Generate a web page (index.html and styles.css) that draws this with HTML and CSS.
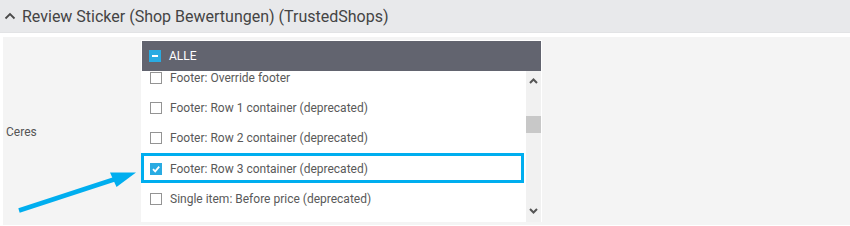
FILE: index.html
```html
<!DOCTYPE html>
<html lang="de">
<head>
<meta charset="utf-8">
<title>Review Sticker</title>
<link rel="stylesheet" href="styles.css">
</head>
<body>
<div class="page">
  <div class="section-header">
    <svg class="chev" width="12" height="8" viewBox="0 0 12 8"><path d="M1.5 6.5 L6 2 L10.5 6.5" fill="none" stroke="#4a4a4a" stroke-width="1.8"/></svg>
    <span class="section-title">Review Sticker (Shop Bewertungen) (TrustedShops)</span>
  </div>
  <div class="section-body">
    <div class="label">Ceres</div>
    <div class="listbox">
      <div class="list-head">
        <span class="cb cb-minus"></span>
        <span class="head-text">ALLE</span>
      </div>
      <div class="list-body">
        <div class="items">
          <ul class="item-list">
            <li class="item"><span class="cb"></span>Footer: Override footer</li>
            <li class="item"><span class="cb"></span>Footer: Row 1 container (deprecated)</li>
            <li class="item"><span class="cb"></span>Footer: Row 2 container (deprecated)</li>
            <li class="item"><span class="cb cb-checked"><svg width="10" height="10" viewBox="0 0 10 10"><path d="M2 5.2 L4.2 7.4 L8.2 2.6" fill="none" stroke="#fff" stroke-width="1.8"/></svg></span>Footer: Row 3 container (deprecated)</li>
            <li class="item"><span class="cb"></span>Single item: Before price (deprecated)</li>
          </ul>
        </div>
        <div class="scrollbar">
          <div class="sb-btn"><svg width="9" height="6" viewBox="0 0 9 6"><path d="M1 5 L4.5 1.5 L8 5" fill="none" stroke="#555" stroke-width="2"/></svg></div>
          <div class="sb-track"><div class="sb-thumb"></div></div>
          <div class="sb-btn sb-btn-down"><svg width="9" height="6" viewBox="0 0 9 6"><path d="M1 1 L4.5 4.5 L8 1" fill="none" stroke="#555" stroke-width="2"/></svg></div>
        </div>
      </div>
    </div>
  </div>
  <div class="highlight"></div>
  <svg class="annot-arrow" width="850" height="226" viewBox="0 0 850 226">
    <line x1="19" y1="210.5" x2="120" y2="177.5" stroke="#00aeef" stroke-width="4.5"/>
    <polygon points="110,172.5 136,172.5 116.5,187" fill="#00aeef"/>
  </svg>
</div>
</body>
</html>
```
FILE: styles.css
```css
* { box-sizing: border-box; }
html, body { margin: 0; padding: 0; background: #fff; }
body { font-family: Roboto, "Liberation Sans", Arial, sans-serif; }
.page { position: relative; width: 850px; height: 226px; overflow: hidden; }

.section-header {
  height: 33px;
  background: #e8e9eb;
  border-bottom: 1px solid #e2e3e5;
  display: flex;
  align-items: center;
  padding-left: 4px;
  gap: 6px;
}
.chev { display: block; margin-top: -1px; }
.section-title { font-size: 16px; color: #444; letter-spacing: 0; }

.section-body {
  margin: 4px 0 0 3px;
  height: 188px;
  background: #f4f4f4;
  display: grid;
  grid-template-columns: 138px 401px;
  padding: 3px 0;
}
.label {
  align-self: center;
  padding-left: 3px;
  padding-top: 1px;
  font-size: 12px;
  color: #555;
}
.listbox {
  border: 1px solid #fff;
  border-bottom: none;
  background: #fff;
  display: flex;
  flex-direction: column;
}
.list-head {
  height: 30px;
  background: #62646f;
  display: flex;
  align-items: center;
  padding-left: 7px;
  gap: 8px;
}
.head-text { color: #fff; font-size: 12px; font-weight: 400; }

.cb {
  width: 12px;
  height: 12px;
  border: 1px solid #949494;
  background: #fff;
  display: inline-flex;
  align-items: center;
  justify-content: center;
  flex: none;
}
.cb-minus { background: #29abe2; border-color: #29abe2; }
.cb-minus::after { content: ""; width: 6px; height: 2px; background: #fff; }
.cb-checked { background: #29abe2; border-color: #29abe2; }
.cb-checked svg { display: block; }

.list-body { display: flex; height: 151px; }
.items { flex: 1; overflow: hidden; }
.item-list { list-style: none; margin: -8.5px 0 0 0; padding: 0 0 0 8px; }
.item {
  height: 30.4px;
  display: flex;
  align-items: center;
  gap: 8px;
  font-size: 12px;
  color: #595959;
}

.scrollbar {
  width: 15px;
  background: #f1f1f1;
  display: flex;
  flex-direction: column;
}
.sb-btn { height: 20px; display: flex; align-items: center; justify-content: center; }
.sb-btn svg { display: block; }
.sb-btn-down { height: 18px; align-items: flex-start; padding-top: 4px; }
.sb-track { flex: 1; }
.sb-thumb { margin-top: 25px; height: 17px; background: #c8c8c8; }

.highlight {
  position: absolute;
  left: 141px;
  top: 153px;
  width: 383px;
  height: 30px;
  border: 3px solid #00aeef;
}
.annot-arrow { position: absolute; left: 0; top: 0; pointer-events: none; }
```
